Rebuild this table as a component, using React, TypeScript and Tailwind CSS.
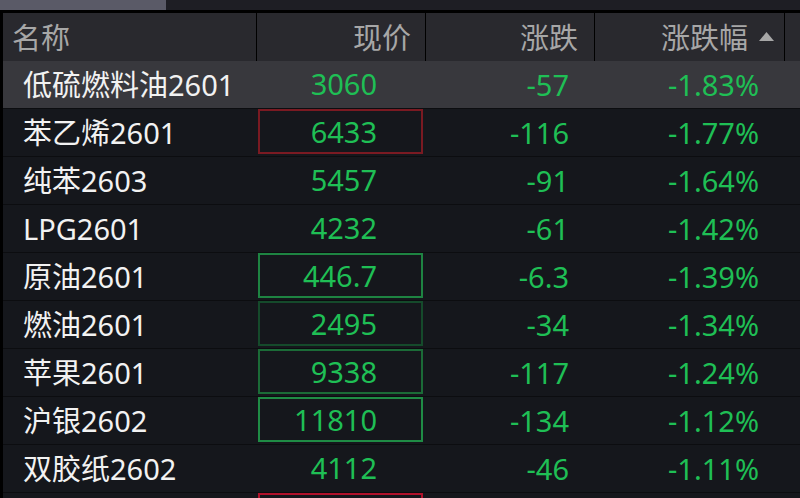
const rows = [
  { name: '低硫燃料油2601', price: '3060', chg: '-57', pct: '-1.83%', box: '' },
  { name: '苯乙烯2601', price: '6433', chg: '-116', pct: '-1.77%', box: 'border-[#7a1a22]' },
  { name: '纯苯2603', price: '5457', chg: '-91', pct: '-1.64%', box: '' },
  { name: 'LPG2601', price: '4232', chg: '-61', pct: '-1.42%', box: '' },
  { name: '原油2601', price: '446.7', chg: '-6.3', pct: '-1.39%', box: 'border-[#1e8442]' },
  { name: '燃油2601', price: '2495', chg: '-34', pct: '-1.34%', box: 'border-[#154a2b]' },
  { name: '苹果2601', price: '9338', chg: '-117', pct: '-1.24%', box: 'border-[#1b6b37]' },
  { name: '沪银2602', price: '11810', chg: '-134', pct: '-1.12%', box: 'border-[#1f8c45]' },
  { name: '双胶纸2602', price: '4112', chg: '-46', pct: '-1.11%', box: '' },
  { name: '', price: '', chg: '', pct: '', box: 'border-[#b0122b]' },
];

function Row({ r, selected }: { r: (typeof rows)[number]; selected: boolean }) {
  return (
    <div
      className={`flex h-[48px] shrink-0 border-b border-[#0c0d10] ${selected ? 'bg-[#38383d]' : 'bg-[#15171c]'}`}
    >
      <div className="w-[253px] pl-[20px] flex items-center text-[#f2f2f2] whitespace-nowrap">{r.name}</div>
      <div className="w-[169px] pl-[2px] pr-[2px] flex">
        <div
          className={`flex-1 h-[45px] flex items-center justify-end pr-[44px] text-[#1fbf55] border-2 ${r.box || 'border-transparent'}`}
        >
          {r.price}
        </div>
      </div>
      <div className="w-[169px] flex items-center justify-end pr-[25px] text-[#1fbf55]">{r.chg}</div>
      <div className="w-[190px] flex items-center justify-end pr-[25px] text-[#1fbf55]">{r.pct}</div>
    </div>
  );
}

export default function App() {
  return (
    <div
      className="w-[800px] h-[498px] overflow-hidden bg-[#15171c] flex flex-col text-[29px] leading-none"
      style={{ fontFamily: '"Noto Sans", "Noto Sans CJK SC", sans-serif' }}
    >
      <div className="h-[10px] flex shrink-0 bg-[#1e1e24]">
        <div className="w-[166px] bg-[#5a5a67]" />
      </div>
      <div className="h-[3px] shrink-0 bg-black" />
      <div className="flex flex-1 min-h-0 border-l-[3px] border-black">
        <div className="flex flex-col w-full">
          <div className="flex h-[48px] shrink-0 bg-[#29292e] text-[#a7a7a7]">
            <div className="w-[253px] pl-[9px] flex items-center">名称</div>
            <div className="w-[169px] border-l border-black flex items-center justify-end pr-[14px]">现价</div>
            <div className="w-[169px] border-l border-black flex items-center justify-end pr-[16px]">涨跌</div>
            <div className="w-[190px] border-l border-black flex items-center justify-end pr-[10px] gap-[11px]">
              <span>涨跌幅</span>
              <svg width="15" height="9" viewBox="0 0 15 9" className="mb-[2px]">
                <polygon points="7.5,0 15,9 0,9" fill="#a7a7a7" />
              </svg>
            </div>
            <div className="flex-1 border-l border-black" />
          </div>
          {rows.map((r, i) => (
            <Row key={i} r={r} selected={i === 0} />
          ))}
        </div>
      </div>
    </div>
  );
}
